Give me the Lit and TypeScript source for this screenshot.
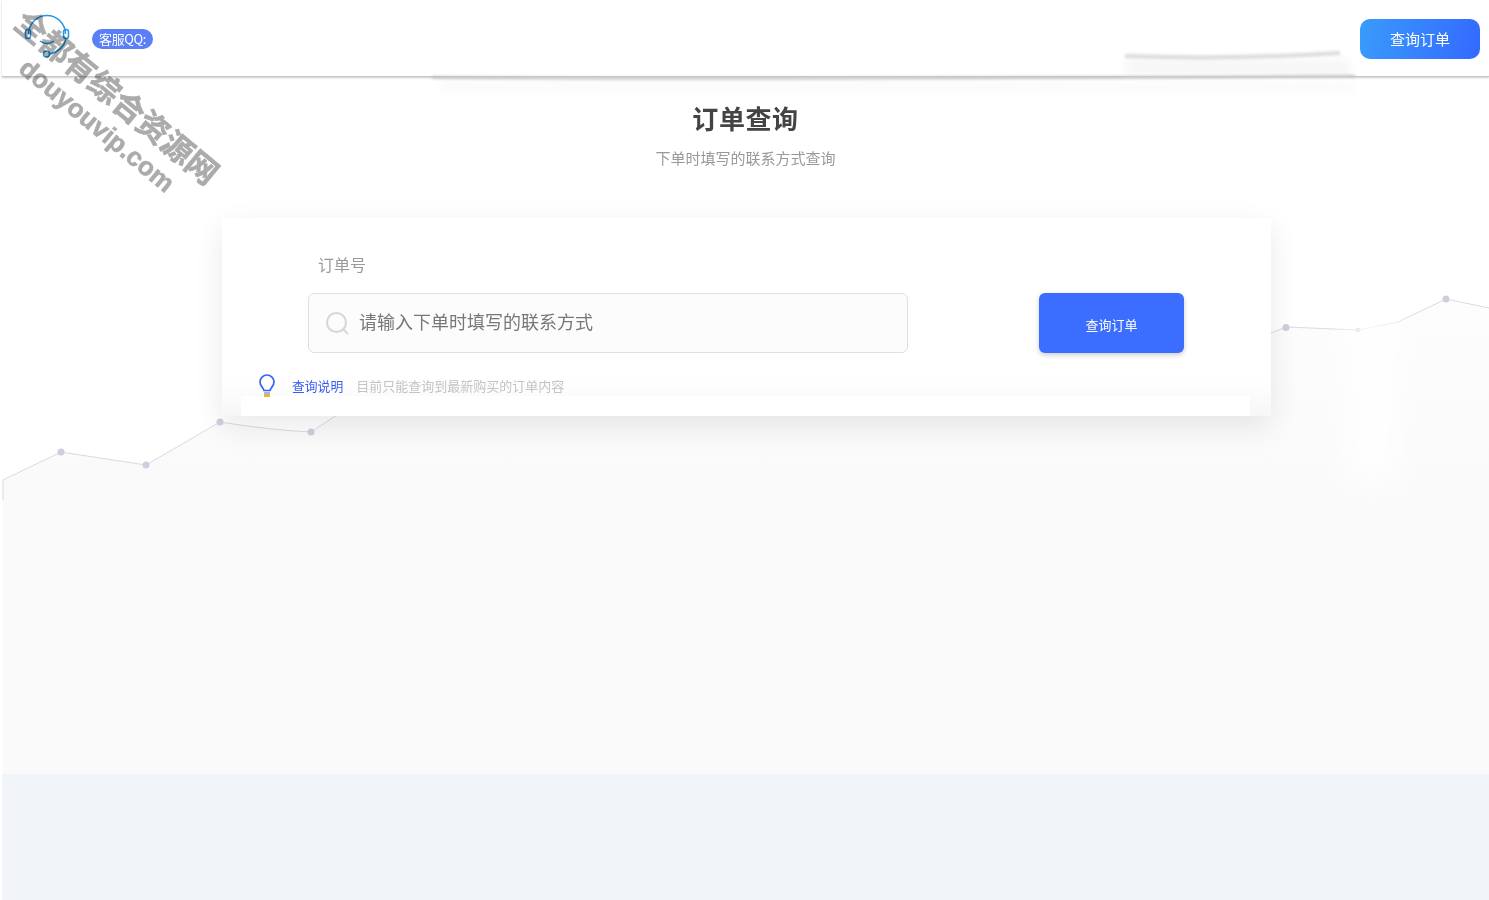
import { LitElement, html, css } from "lit";
import { customElement } from "lit/decorators.js";

@customElement("app-root")
export class AppRoot extends LitElement {
  static styles = css`
    :host {
      display: block;
      position: relative;
      width: 1489px;
      height: 900px;
      overflow: hidden;
      background: #fff;
      font-family: "Noto Sans CJK SC", "Noto Sans", sans-serif;
    }
    .canvas { position: absolute; left: 0; top: 0; width: 1489px; height: 900px; }
    .page { position: relative; display: flex; flex-direction: column; height: 900px; padding-left: 2px; box-sizing: border-box; }
    .header {
      flex: none; height: 76px; box-sizing: content-box; display: flex; align-items: center;
      justify-content: space-between; padding-right: 9px; background: #fff;
      border-bottom: 1px solid #c6c6c6; box-shadow: 0 1px 2px rgba(0,0,0,.2);
    }
    .brand { display: flex; align-items: center; gap: 20px; padding-left: 20px; }
    .logo { width: 50px; height: 50px; display: block; margin-top: 2px; }
    .badge {
      height: 20px; width: 61px; border-radius: 10px; background: #5a7ff6; color: #fff; font-size: 13px;
      line-height: 20px; text-align: center; white-space: nowrap; margin-top: 2px; letter-spacing: -.4px;
    }
    .top-btn {
      width: 120px; height: 40px; border-radius: 10px; background: linear-gradient(100deg, #3a9bfb, #3369ff);
      color: #fff; font-size: 15px; line-height: 40px; text-align: center; margin-top: 1px;
    }
    .main { flex: 1; min-height: 0; display: flex; flex-direction: column; }
    h1 { margin: 22px 0 0; height: 38px; font-size: 26px; line-height: 38px; font-weight: 700; color: #444; text-align: center; letter-spacing: .6px; }
    .sub { margin: 10px 0 0; height: 22px; font-size: 15px; line-height: 22px; color: #999; text-align: center; }
    .card {
      margin: 49px 0 0 220px; width: 1049px; height: 198px; box-sizing: border-box; padding-top: 35px; position: relative;
      background: linear-gradient(#fff 0, #fff 160px, #f7f7f7 198px);
      box-shadow: 0 10px 28px rgba(0,0,0,.09);
    }
    .label { margin-left: 96px; height: 22px; font-size: 16px; line-height: 22px; color: #999; }
    .row { display: flex; margin: 18px 0 0 86px; gap: 131px; }
    .input {
      width: 600px; height: 60px; box-sizing: border-box; border: 1px solid #e0e0e0; border-radius: 6px; background: #fcfcfc;
      display: flex; align-items: center; padding-left: 16px; gap: 9px; color: #777; font-size: 18px;
    }
    .input span { margin-bottom: 4px; }
    .search { width: 25px; height: 25px; display: block; }
    .go {
      width: 145px; height: 60px; border-radius: 6px; background: #3b6eff; color: #fff; font-size: 13px;
      line-height: 64px; text-align: center; box-shadow: 0 2px 5px rgba(0,0,0,.2);
    }
    .hint { display: flex; align-items: center; margin: 21px 0 0 36px; font-size: 13px; height: 24px; position: relative; z-index: 1; }
    .hint span { margin-bottom: 1px; }
    .bulb { width: 18px; height: 24px; display: block; }
    .hint-a { margin-left: 16px; color: #3b5bf5; font-size: 12.800px; }
    .hint-b { margin-left: 13px; color: #c4c4c4; }
    .strip { position: absolute; left: 19px; width: 1009px; top: 178px; height: 20px; background: #fff; }
    .foot { flex: none; height: 126px; background: #f1f4f9; }
    .wm { position: absolute; color: #ababab; font-weight: 700; transform: rotate(39.6deg); transform-origin: 0 50%; white-space: nowrap; line-height: 1; -webkit-text-stroke: .6px #ababab; mix-blend-mode: multiply; }
    .wm1 { left: 21px; top: 0; font-size: 31.5px; font-family: "Noto Sans CJK SC", sans-serif; }
    .wm2 { left: 23px; top: 51px; font-size: 26px; font-family: "Liberation Sans", sans-serif; }
    .smudge { position: absolute; left: 0; top: 0; width: 1489px; height: 500px; pointer-events: none; }
  `;

  render() {
    return html`
      <svg class="canvas" viewBox="0 0 1489 900">
        <defs>
          <linearGradient id="f" x1="0" y1="0" x2="0" y2="1">
            <stop offset="0" stop-color="#fdfdfe"/><stop offset=".35" stop-color="#fafafb"/><stop offset="1" stop-color="#fafafa"/>
          </linearGradient>
        </defs>
        <path d="M3 480L61 452L146 465L220 422Q270 430 311 432L340 413L1271 333L1286 327L1358 330L1398 322L1446 299L1489 308V774H3Z" fill="url(#f)"/>
        <path d="M3 500V480L61 452L146 465L220 422Q270 430 311 432L340 413M1271 333L1286 327L1358 330L1398 322L1446 299L1489 308" fill="none" stroke="#d9dbe6" stroke-width="1"/>
        <g fill="#ccd0de">
          <circle cx="61" cy="452" r="3.5"/><circle cx="146" cy="465" r="3.5"/><circle cx="220" cy="422" r="3.5"/>
          <circle cx="311" cy="432" r="3.5"/><circle cx="1286" cy="327.500" r="3.5"/><circle cx="1358" cy="330" r="2.500"/><circle cx="1446" cy="299" r="3.5"/>
        </g>
      </svg>
      <div class="page">
        <div class="header">
          <div class="brand">
            <svg class="logo" viewBox="0 0 50 50" fill="none" stroke="#1f97e6" stroke-width="1.5">
              <path d="M6.500 20A18.500 18.500 0 0 1 43.500 20"/>
              <rect x="3.500" y="15.500" width="5" height="9" rx="2.500"/>
              <rect x="41.500" y="15.500" width="5" height="9" rx="2.500"/>
              <path d="M18 27Q25 32 32 27"/>
              <path d="M44 25C42 33 36 38 28 40"/>
              <circle cx="24.500" cy="40" r="3"/>
            </svg>
            <div class="badge">客服QQ:</div>
          </div>
          <div class="top-btn">查询订单</div>
        </div>
        <div class="main">
          <h1>订单查询</h1>
          <p class="sub">下单时填写的联系方式查询</p>
          <div class="card">
            <div class="label">订单号</div>
            <div class="row">
              <div class="input">
                <svg class="search" viewBox="0 0 25 25" fill="none" stroke="#d6d6d6" stroke-width="2">
                  <circle cx="11.500" cy="11.500" r="9.500"/><path d="M18.500 18.500L23 23"/>
                </svg>
                <span>请输入下单时填写的联系方式</span>
              </div>
              <div class="go">查询订单</div>
            </div>
            <div class="hint">
              <svg class="bulb" viewBox="0 0 18 24" fill="none">
                <path d="M6 16.500C5.500 13.500 2 12.500 2 8A7 7 0 0 1 16 8C16 12.500 12.500 13.500 12 16.500Z" stroke="#3566f5" stroke-width="1.700"/>
                <path d="M6 18H12V20H6Z" fill="#9db4ee"/>
                <path d="M6 20H12V23H6Z" fill="#e9b33f"/>
              </svg>
              <span class="hint-a">查询说明</span>
              <span class="hint-b">目前只能查询到最新购买的订单内容</span>
            </div>
            <div class="strip"></div>
          </div>
        </div>
        <div class="foot"></div>
      </div>
      <svg class="smudge" viewBox="0 0 1489 500">
        <defs>
          <filter id="b2" x="-10%" y="-400%" width="120%" height="900%"><feGaussianBlur stdDeviation="1.500"/></filter>
          <filter id="b3" x="-10%" y="-100%" width="120%" height="300%"><feGaussianBlur stdDeviation="4"/></filter>
          <filter id="b6" x="-40%" y="-30%" width="180%" height="160%"><feGaussianBlur stdDeviation="12"/></filter>
        </defs>
        <rect x="1125" y="60" width="225" height="14" fill="#f6f6f8" filter="url(#b3)"/>
        <rect x="440" y="82" width="915" height="12" fill="#fbfbfc" filter="url(#b3)"/>
        <path d="M432 77.500Q750 80 1355 76" stroke="#bcbaba" stroke-width="2" fill="none" filter="url(#b2)"/>
        <path d="M1125 56Q1230 60 1340 53" stroke="#dadade" stroke-width="4" fill="none" filter="url(#b2)"/>
        <rect x="1345" y="310" width="55" height="170" fill="#ffffff" opacity=".75" filter="url(#b6)"/>
      </svg>
      <div class="wm wm1">全都有综合资源网</div>
      <div class="wm wm2">douyouvip.com</div>
    `;
  }
}
